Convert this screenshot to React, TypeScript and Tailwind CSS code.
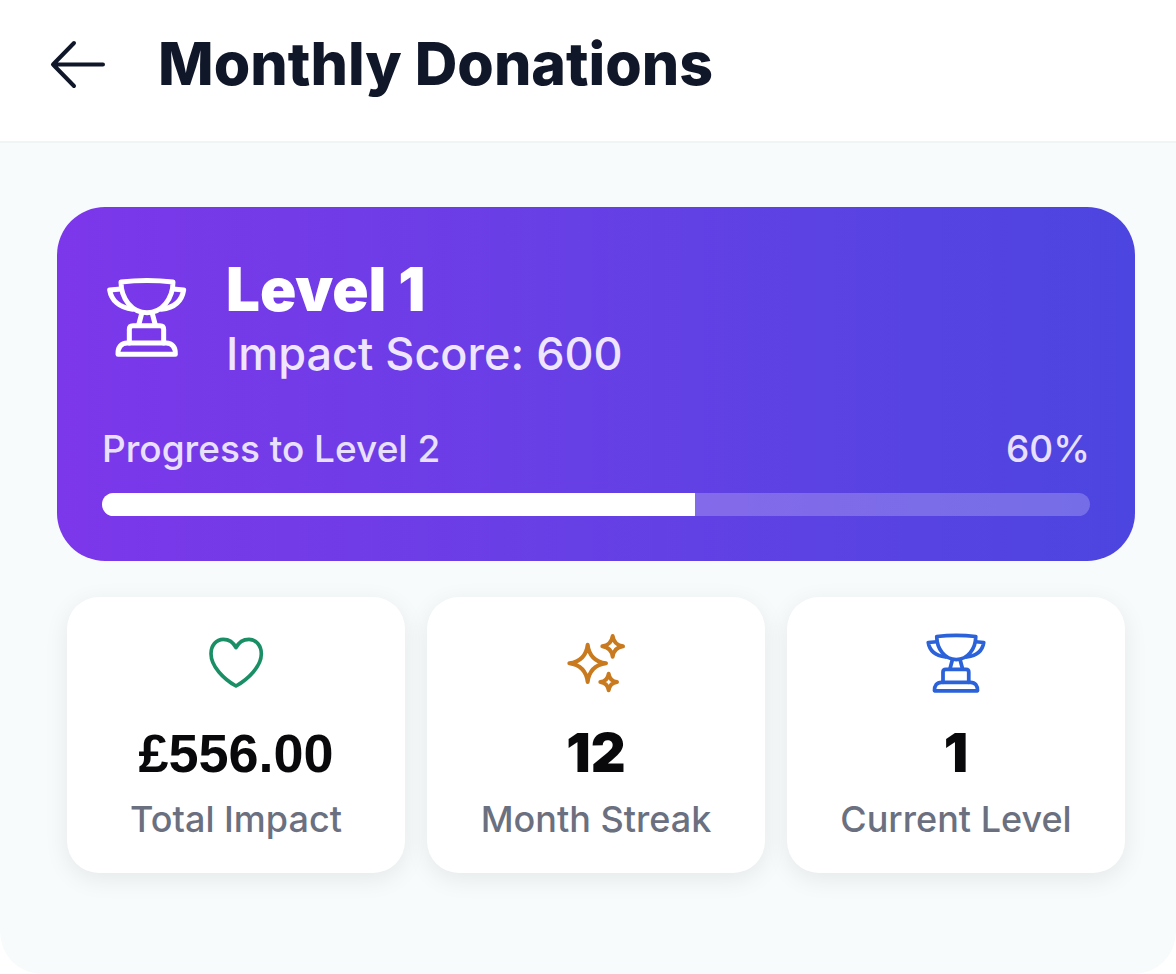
import type { ReactNode } from 'react'
import { clsx } from 'clsx'

interface IconProps {
  className?: string
}

interface Stat {
  label: string
  value: string
  icon: ReactNode
  valueClass: string
}

const score = 600
const progress = 60

function ArrowLeftIcon({ className }: IconProps) {
  return (
    <svg
      viewBox="0 0 60 60"
      className={className}
      fill="none"
      stroke="currentColor"
      strokeWidth="4"
      strokeLinecap="round"
      strokeLinejoin="round"
      aria-hidden="true"
    >
      <path d="M26 9 5 30.500 26 52M5 30.500h50" />
    </svg>
  )
}

function TrophyIcon({ className, viewBox = '50 35 240 240' }: IconProps & { viewBox?: string }) {
  return (
    <svg
      viewBox={viewBox}
      className={className}
      fill="none"
      stroke="currentColor"
      strokeWidth="15"
      strokeLinecap="round"
      strokeLinejoin="round"
      aria-hidden="true"
    >
      {/* Cup and handles */}
      <path d="M93 49Q171 40 249 49C249 98 217 141 171 141C125 141 93 98 93 49Z" />
      <path d="M93 70 59 73C64 104 88 126 128 131" />
      <path d="M249 70 281 73C276 104 254 126 214 131" />
      {/* Stem, block and foot */}
      <path d="M155 144 146 178M187 144 196 178" />
      <path d="M118 232V191Q118 180 129 180H210Q221 180 221 191V232" />
      <path d="M84 266H256C257 246 247 232 228 232H112C93 232 83 246 84 266Z" />
    </svg>
  )
}

function HeartIcon({ className }: IconProps) {
  return (
    <svg
      viewBox="47 40 180 180"
      className={className}
      fill="none"
      stroke="currentColor"
      strokeWidth="11"
      strokeLinejoin="round"
      aria-hidden="true"
    >
      <path d="M137 84C128 66 114 59 99 59C77 59 62 78 62 102C62 140 100 178 137 199C174 178 213 140 213 102C213 78 197 59 176 59C160 59 146 66 137 84Z" />
    </svg>
  )
}

function SparklesIcon({ className }: IconProps) {
  return (
    <svg
      viewBox="48 39 180 180"
      className={className}
      fill="none"
      stroke="currentColor"
      strokeWidth="12"
      strokeLinejoin="round"
      aria-hidden="true"
    >
      <path d="M113 74Q119 123 168 130Q119 137 113 186Q107 137 58 130Q107 123 113 74Z" />
      <path d="M188 48Q192 75 219 79Q192 83 188 110Q184 83 157 79Q184 75 188 48Z" />
      <path d="M176 161Q179 183 201 186Q179 189 176 211Q173 189 151 186Q173 183 176 161Z" />
    </svg>
  )
}

const stats: Stat[] = [
  {
    label: 'Total Impact',
    value: '£556.00',
    icon: <HeartIcon className="size-15 text-[#1a8f66]" />,
    valueClass: "font-['Liberation_Sans',sans-serif] font-bold",
  },
  {
    label: 'Month Streak',
    value: '12',
    icon: <SparklesIcon className="size-15 text-[#c97a1e]" />,
    valueClass: 'font-black',
  },
  {
    label: 'Current Level',
    value: '1',
    icon: <TrophyIcon className="size-15 text-[#2b62d9]" />,
    valueClass: 'font-black',
  },
]

function StatCard({ label, value, icon, valueClass }: Stat) {
  return (
    <div className="flex flex-col items-center rounded-[32px] bg-white pt-9 pb-8 shadow-[0_6px_24px_rgba(0,0,0,0.08)]">
      {icon}
      <div className={clsx('mt-7 text-[54px] leading-16 text-[#09090b]', valueClass)}>{value}</div>
      <div className="mt-3 text-[36px] leading-11 font-medium text-[#6b7080]">{label}</div>
    </div>
  )
}

export default function App() {
  return (
    <div className="flex min-h-screen flex-col bg-white font-['Inter',sans-serif]">
      <header className="flex items-center gap-[50px] border-b-2 border-[#eff4f4] px-12 pt-7 pb-[41px]">
        <button type="button" aria-label="Back" className="text-[#0f1729]">
          <ArrowLeftIcon className="size-15" />
        </button>
        <h1 className="text-[59px] leading-18 font-extrabold text-[#0f1729]">Monthly Donations</h1>
      </header>

      <main className="flex-1 rounded-b-[42px] bg-[#f7fbfc] pt-16 pr-[41px] pb-16 pl-[57px]">
        {/* Level banner */}
        <section className="rounded-[48px] bg-linear-to-r from-[#7c37ea] to-[#4c45e0] px-[45px] pt-[46px] pb-[45px]">
          <div className="flex items-center gap-[34px]">
            <TrophyIcon className="size-[90px] text-white" viewBox="36 22 270 270" />
            <div>
              <h2 className="text-[60px] leading-18 font-black text-white">Level 1</h2>
              <p className="text-[45px] leading-[58px] font-medium text-[#efe6fe]">
                Impact Score: {score}
              </p>
            </div>
          </div>

          <div className="mt-11 flex justify-between text-[37px] leading-11 font-medium text-[#e9e0fd]">
            <span>Progress to Level 2</span>
            <span>{progress}%</span>
          </div>
          <div
            role="progressbar"
            aria-label="Progress to Level 2"
            aria-valuenow={progress}
            aria-valuemin={0}
            aria-valuemax={100}
            className="mt-[22px] h-[23px] overflow-hidden rounded-full bg-white/22"
          >
            <div className="h-full bg-white" style={{ width: `${progress}%` }} />
          </div>
        </section>

        <section className="mt-9 grid grid-cols-3 gap-[22px] px-[10px]">
          {stats.map((stat) => (
            <StatCard key={stat.label} {...stat} />
          ))}
        </section>
      </main>
    </div>
  )
}
